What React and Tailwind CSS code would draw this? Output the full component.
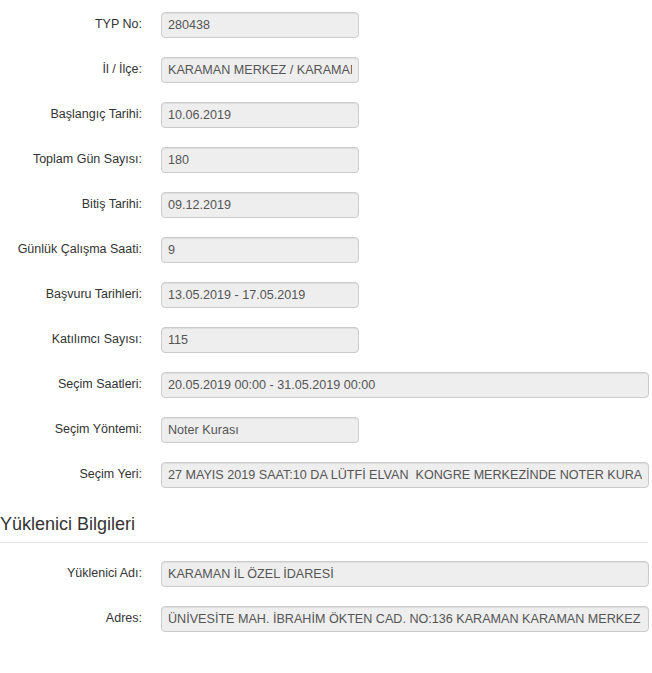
import React from "react";

const rows = [
  { label: "TYP No:", value: "280438" },
  { label: "İl / İlçe:", value: "KARAMAN MERKEZ / KARAMAN" },
  { label: "Başlangıç Tarihi:", value: "10.06.2019" },
  { label: "Toplam Gün Sayısı:", value: "180" },
  { label: "Bitiş Tarihi:", value: "09.12.2019" },
  { label: "Günlük Çalışma Saati:", value: "9" },
  { label: "Başvuru Tarihleri:", value: "13.05.2019 - 17.05.2019" },
  { label: "Katılımcı Sayısı:", value: "115" },
  { label: "Seçim Saatleri:", value: "20.05.2019 00:00 - 31.05.2019 00:00", wide: true },
  { label: "Seçim Yöntemi:", value: "Noter Kurası" },
  {
    label: "Seçim Yeri:",
    value: "27 MAYIS 2019 SAAT:10 DA LÜTFİ ELVAN  KONGRE MERKEZİNDE NOTER KURASI İLE",
    wide: true,
  },
];

const contractor = [
  { label: "Yüklenici Adı:", value: "KARAMAN İL ÖZEL İDARESİ", wide: true },
  { label: "Adres:", value: "ÜNİVESİTE MAH. İBRAHİM ÖKTEN CAD. NO:136 KARAMAN KARAMAN MERKEZ", wide: true },
];

const Field = ({ label, value, wide }) => (
  <div className="flex items-center h-[45px]">
    <label className="w-[142px] shrink-0 text-right text-[12.5px] text-[#333]">{label}</label>
    <input
      readOnly
      value={value}
      className={`ml-[19px] h-[26px] rounded-[4px] border border-[#ccc] bg-[#eee] px-[6px] text-[12.6px] text-[#555] shadow-[inset_0_1px_1px_rgba(0,0,0,0.075)] outline-none ${
        wide ? "w-[488px]" : "w-[198px]"
      }`}
      style={{ fontFamily: "'Liberation Sans', Arial, sans-serif" }}
    />
  </div>
);

export default function App() {
  return (
    <div
      className="w-[652px] min-h-[673px] bg-white pt-[2px]"
      style={{ fontFamily: "'Liberation Sans', Arial, sans-serif" }}
    >
      {rows.map((r) => (
        <Field key={r.label} {...r} />
      ))}

      {/* Yüklenici */}
      <h4 className="mt-[17px] text-[18px] leading-[20px] text-[#333]">Yüklenici Bilgileri</h4>
      <div className="mt-[8px] mr-[4px] border-t border-[#e5e5e5]" />
      <div className="pt-[8px]">
        {contractor.map((r) => (
          <Field key={r.label} {...r} />
        ))}
      </div>
    </div>
  );
}
